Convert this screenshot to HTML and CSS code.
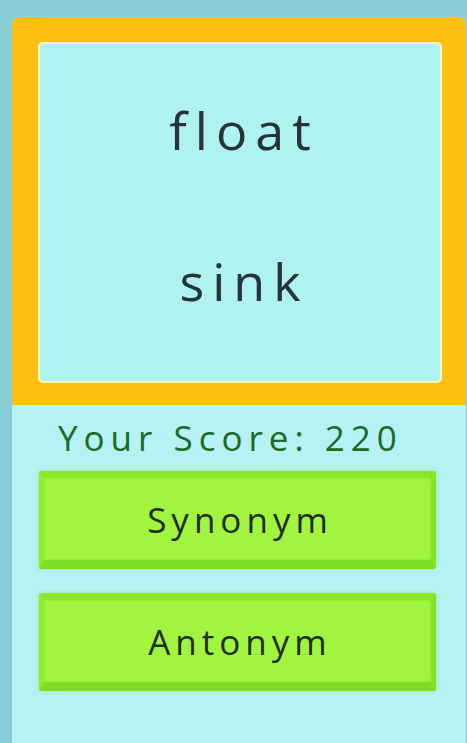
FILE: index.html
```html
<!DOCTYPE html>
<html lang="en">
<head>
<meta charset="utf-8">
<title>Synonym or Antonym</title>
<link rel="stylesheet" href="styles.css">
</head>
<body>
<main class="panel">
  <section class="frame">
    <div class="card">
      <div class="word word-top">float</div>
      <div class="word word-bottom">sink</div>
    </div>
  </section>
  <section class="controls">
    <div class="score">Your Score: 220</div>
    <button class="btn">Synonym</button>
    <button class="btn">Antonym</button>
  </section>
</main>
</body>
</html>
```
FILE: styles.css
```css
html, body {
  margin: 0;
  padding: 0;
  height: 100%;
}
body {
  background: #88cdd6;
  font-family: "Open Sans", "DejaVu Sans", sans-serif;
  overflow: hidden;
}
.panel {
  margin: 17px 1px 0 12px;
  height: 726px;
  background: #b6f2f4;
  border-radius: 8px 8px 0 0;
  display: flex;
  flex-direction: column;
}
.frame {
  background: #fdc012;
  border-radius: 8px 8px 0 0;
  padding: 25px 24px 22px 26px;
}
.card {
  height: 337px;
  border: 2px solid #fff4c2;
  border-radius: 5px;
  background: #aff3f0;
  display: flex;
  flex-direction: column;
  align-items: center;
}
.word {
  color: #26343a;
  font-size: 52px;
  line-height: 60px;
  letter-spacing: 8px;
  padding-left: 8px;
}
.word-top {
  margin-top: 56px;
}
.word-bottom {
  margin-top: 91px;
}
.controls {
  display: flex;
  flex-direction: column;
  padding: 0 30px 0 27px;
}
.score {
  color: #1b6a26;
  font-size: 35px;
  line-height: 40px;
  letter-spacing: 6px;
  margin: 13px 0 13px 19px;
}
.btn {
  box-sizing: border-box;
  height: 98px;
  margin-bottom: 24px;
  border-style: solid;
  border-width: 7px 5px 9px 5px;
  border-color: #8be62b #88e228 #7ddd22 #92ea31;
  border-radius: 3px;
  background: #a2f53f;
  color: #1f2d1c;
  font-family: inherit;
  font-size: 35px;
  letter-spacing: 5px;
  padding: 0 0 0 5px;
  box-shadow:
    inset 0 0 3px rgba(120, 215, 30, 0.6),
    0 0 4px rgba(140, 225, 90, 0.7);
}
```
